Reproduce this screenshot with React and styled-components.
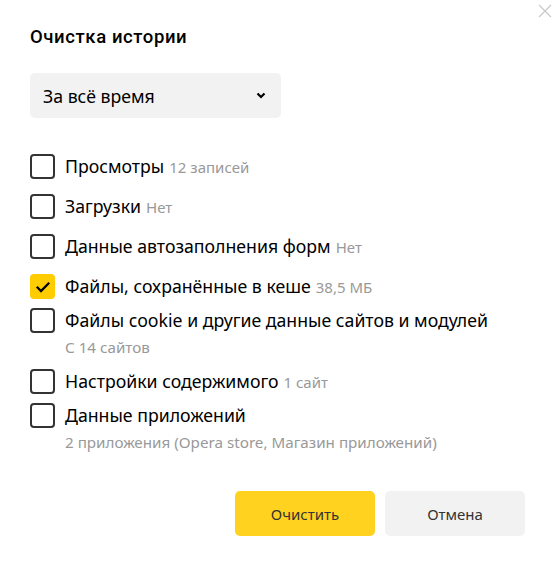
import React, { useState } from 'react'
import styled, { createGlobalStyle } from 'styled-components'

const GlobalStyle = createGlobalStyle`
  html, body {
    margin: 0;
    padding: 0;
    background: #fff;
  }
  body {
    font-family: "Noto Sans", "Open Sans", sans-serif;
    color: #000;
  }
`

const Dialog = styled.div`
  position: relative;
  width: 555px;
  height: 567px;
  box-sizing: border-box;
  padding: 25px 30px 0 30px;
  display: flex;
  flex-direction: column;
`

const Close = styled.button`
  position: absolute;
  top: 4px;
  right: 3px;
  width: 14px;
  height: 14px;
  padding: 0;
  border: 0;
  background: transparent;
  cursor: pointer;
  color: #c8c8c8;
`

const Title = styled.h2`
  margin: 0;
  font-family: Roboto, "Noto Sans", sans-serif;
  font-size: 18.5px;
  line-height: 24px;
  font-weight: 500;
  letter-spacing: 0.6px;
`

const Select = styled.button`
  margin-top: 24px;
  width: 251px;
  height: 45px;
  box-sizing: border-box;
  padding: 0 15px 0 13px;
  display: flex;
  align-items: center;
  justify-content: space-between;
  border: 0;
  border-radius: 5px;
  background: #f2f2f2;
  font-family: inherit;
  font-size: 17.7px;
  color: #000;
  cursor: pointer;
`

const List = styled.div`
  margin-top: 36px;
  display: flex;
  flex-direction: column;
`

const Row = styled.label`
  display: flex;
  align-items: flex-start;
  margin-top: ${({ $gap }) => $gap}px;
  cursor: pointer;
`

const Box = styled.span`
  flex: none;
  width: 25px;
  height: 25px;
  box-sizing: border-box;
  border-radius: 4px;
  border: ${({ $checked }) => ($checked ? '0' : '2px solid #333')};
  background: ${({ $checked }) => ($checked ? '#ffcc00' : '#fff')};
  display: flex;
  align-items: center;
  justify-content: center;
`

const Texts = styled.div`
  margin-left: 10px;
  display: flex;
  flex-direction: column;
`

const Label = styled.div`
  font-size: 17.7px;
  line-height: 25px;
  height: 25px;
  color: #000;
`

const Meta = styled.span`
  margin-left: 5px;
  font-size: 15px;
  line-height: 1;
  color: #999;
`

const Sub = styled.div`
  margin-top: 4px;
  font-size: 15.2px;
  line-height: 20px;
  color: #999;
`

const Actions = styled.div`
  margin-top: auto;
  margin-bottom: 31px;
  display: flex;
  justify-content: flex-end;
  gap: 10px;
`

const Button = styled.button`
  width: 140px;
  height: 45px;
  border: 0;
  border-radius: 5px;
  background: ${({ $primary }) => ($primary ? '#ffd21f' : '#f2f2f2')};
  font-family: inherit;
  font-size: 15px;
  color: #333;
  cursor: pointer;
`

const items = [
  { label: 'Просмотры', meta: '12 записей', gap: 0 },
  { label: 'Загрузки', meta: 'Нет', gap: 15 },
  { label: 'Данные автозаполнения форм', meta: 'Нет', gap: 15 },
  { label: 'Файлы, сохранённые в кеше', meta: '38,5 МБ', gap: 15, checked: true },
  { label: 'Файлы cookie и другие данные сайтов и модулей', sub: 'С 14 сайтов', gap: 9 },
  { label: 'Настройки содержимого', meta: '1 сайт', gap: 12 },
  { label: 'Данные приложений', sub: '2 приложения (Opera store, Магазин приложений)', gap: 9 },
]

function Check() {
  return (
    <svg width="16" height="12" viewBox="0 0 16 12">
      <path d="M1.8 5.8 L6 10 L14.2 1.8" fill="none" stroke="#000" strokeWidth="2.3" />
    </svg>
  )
}

export default function App() {
  const [state, setState] = useState(items.map(i => !!i.checked))

  const toggle = idx => setState(s => s.map((v, i) => (i === idx ? !v : v)))

  return (
    <>
      <GlobalStyle />
      <Dialog>
        <Close aria-label="Закрыть">
          <svg width="14" height="14" viewBox="0 0 14 14">
            <path d="M1 1 L13 13 M13 1 L1 13" stroke="currentColor" strokeWidth="1.2" />
          </svg>
        </Close>
        <Title>Очистка истории</Title>
        <Select>
          За всё время
          <svg width="10" height="7" viewBox="0 0 10 7">
            <path d="M1.5 1.5 L5 5 L8.5 1.5" fill="none" stroke="#000" strokeWidth="2.2" />
          </svg>
        </Select>
        <List>
          {items.map((item, idx) => (
            <Row key={item.label} $gap={item.gap} onClick={() => toggle(idx)}>
              <Box $checked={state[idx]}>{state[idx] && <Check />}</Box>
              <Texts>
                <Label>
                  {item.label}
                  {item.meta && <Meta>{item.meta}</Meta>}
                </Label>
                {item.sub && <Sub>{item.sub}</Sub>}
              </Texts>
            </Row>
          ))}
        </List>
        <Actions>
          <Button $primary>Очистить</Button>
          <Button>Отмена</Button>
        </Actions>
      </Dialog>
    </>
  )
}
